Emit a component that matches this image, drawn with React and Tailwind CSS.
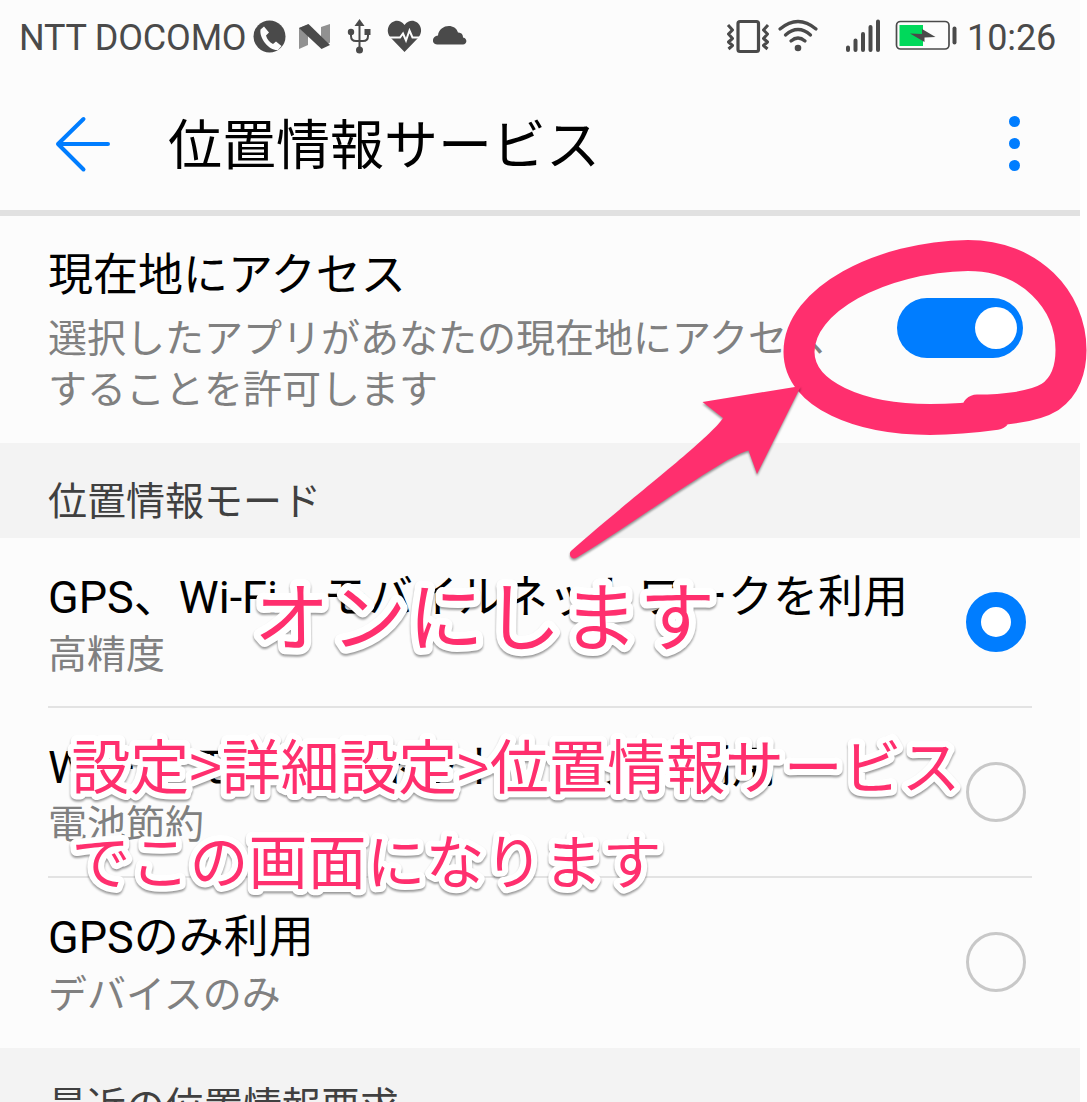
const PINK = '#ff2f6e';

function StatusBar() {
  return (
    <div className="flex h-[76px] items-center justify-between pl-[19px] pr-[25px] text-[#4a4a4a]">
      <div className="flex items-center">
        <span className="w-[231px] whitespace-nowrap text-[36px] leading-[76px] tracking-[-0.2px]">NTT DOCOMO</span>
        <svg className="h-[76px] w-[220px]" viewBox="250 0 220 76" fill="currentColor">
          <circle cx="269.500" cy="36.500" r="16" />
          <path d="M260.500 29.500l3.500-3 5 6-3 3c1 4 3.500 6.500 7 8.500l3-2.500 5.500 4.500-3.500 4c-8 1-19-11-17.500-20.500z" fill="#fcfcfc" />
          <path d="M299 28l9-3.500V45l-9 4zM321 27l9-3v18.500L321 48z" opacity=".6" />
          <path d="M299 28l9.500-4L330 45l-8.500 4z" />
          <path d="M359.500 19l5 7h-10z" />
          <path d="M359.500 24v26M351 33v3q0 5 5 5h7q5 0 5-5v-3" fill="none" stroke="currentColor" strokeWidth="2" />
          <circle cx="351" cy="32" r="3.200" />
          <rect x="364.500" y="29" width="6" height="6" />
          <circle cx="359.500" cy="50" r="3.500" />
          <path d="M404.500 52l-14-14.500C382 27 396 14 404.500 25c8.500-11 22.500 2 14 12.500z" />
          <path d="M387 37.500h13l3-4 3 7 3.500-10 3 7H423" fill="none" stroke="#fcfcfc" strokeWidth="2" />
          <path d="M437 44.500c-6 0-5-9 1-9 1-11 17-13 20-3 5 0 5 4 5 5 5 1 4 7 0 7z" />
        </svg>
      </div>
      <div className="flex items-center">
        <svg className="h-[76px] w-[240px]" viewBox="724 0 240 76" fill="none" stroke="currentColor">
          <rect x="738" y="21.500" width="20.500" height="30" rx="2" strokeWidth="3.200" />
          <path d="M728 25l4.500 5-4 4 4 4.500-4 3.500 4 3.500-4 3.500M768 25l-4.500 5 4 4-4 4.500 4 3.500-4 3.500 4 3.500" strokeWidth="3" strokeLinejoin="round" />
          <path d="M780 29q18-15 36 0M785.500 35q12.500-11 25 0M791 41q7-6 14 0" strokeWidth="3.300" strokeLinecap="round" />
          <circle cx="798" cy="48" r="3.300" fill="currentColor" stroke="none" />
          <path d="M848 47.500v2.500M855.500 40.500V50M863 34v16M870.500 27v23M878 21.500V50" strokeWidth="4" strokeLinecap="round" />
          <rect x="896.500" y="21.500" width="52.500" height="27.500" rx="4" strokeWidth="1.700" />
          <rect x="899.500" y="25" width="23.500" height="21" fill="#00d95b" stroke="none" />
          <path d="M910 33.500l12 .500v-5l13.500 8-11 .5v4.500z" fill="currentColor" stroke="none" />
          <path d="M954.500 28.500v14" strokeWidth="4" strokeLinecap="round" />
        </svg>
        <span className="ml-[3px] w-[88px] whitespace-nowrap text-[36px] leading-[76px] tracking-[-0.1px]">10:26</span>
      </div>
    </div>
  );
}

function Header() {
  return (
    <header className="flex h-[140px] items-center border-b-[6px] border-[#e1e1e1] pl-[54px] pr-[57px] pt-px">
      <svg className="h-[60px] w-[58px]" viewBox="54 114 58 60" fill="none" stroke="#007dff" strokeWidth="4" strokeLinecap="round" strokeLinejoin="round">
        <path d="M83.500 119L58 144 83.500 169.500M58 144h50" />
      </svg>
      <h1 className="ml-14 flex-1 pt-[7px] text-[54px] leading-[80px]">位置情報サービス</h1>
      <div className="flex w-[18px] flex-col items-center gap-[11px]">
        <i className="size-[11px] rounded-full bg-[#007dff]" />
        <i className="size-[11px] rounded-full bg-[#007dff]" />
        <i className="size-[11px] rounded-full bg-[#007dff]" />
      </div>
    </header>
  );
}

function SectionTitle({ children }) {
  return <h2 className="h-[95px] bg-[#f3f3f3] pl-12 pt-[31px] text-[39px] leading-[56px] text-[#404040]">{children}</h2>;
}

function ModeRow({ title, detail, selected, last }) {
  return (
    <div className="flex h-[170px] items-stretch pl-12 pr-12">
      <div className={`flex flex-1 items-start justify-between pr-1.5 ${last ? '' : 'border-b-2 border-[#e3e3e3]'}`}>
        <div className="pt-[27px]">
          <div className="whitespace-nowrap text-[45px] leading-[66px]">{title}</div>
          <div className="text-[39px] leading-[48px] text-[#808080]">{detail}</div>
        </div>
        <span
          className={`mt-[54px] size-[60px] shrink-0 rounded-full ${
            selected ? 'border-[15px] border-[#007dff] bg-white' : 'border-[3px] border-[#c8c8c8]'
          }`}
        />
      </div>
    </div>
  );
}

/* Hand-drawn marks and captions lying over the settings screen */
function Annotations() {
  return (
    <svg className="pointer-events-none absolute inset-0 h-[1102px] w-[1087px]" viewBox="0 0 1087 1102">
      <path
        d="M977 410C1003 410 1034 407 1050 397C1065 387 1071 369 1071 350C1071 300 1030 255.500 968 255.500C880 257 799 300 799 352C799 395 860 419.500 930 419.500C955 419.500 978 417 996 414.500"
        fill="none"
        stroke={PINK}
        strokeWidth="31"
        strokeLinecap="round"
      />
      <g style={{ filter: 'drop-shadow(0 2px 1px rgba(0,0,0,.4))' }}>
        <path d="M571 551C620 507 711 438 723 418L702.500 402 801 386 757 474 748.500 450.500C725 456 640 519 577 557.500Q573 560 570.500 556.500 569 553 571 551z" fill={PINK} />
      </g>
      <g
        fill={PINK}
        stroke="#fff"
        strokeLinejoin="round"
        paintOrder="stroke"
        fontFamily='"Noto Sans CJK JP", sans-serif'
        style={{ filter: 'drop-shadow(0 2px 1px rgba(0,0,0,.4))' }}
      >
        <text x="254" y="645" fontSize="75.500" strokeWidth="14" textLength="461">オンにします</text>
        <text x="71.500" y="789" fontSize="59" strokeWidth="12" textLength="889">設定&gt;詳細設定&gt;位置情報サービス</text>
        <text x="71.500" y="883.500" fontSize="59" strokeWidth="12">でこの画面になります</text>
      </g>
    </svg>
  );
}

export default function App() {
  return (
    <div className="relative h-[1102px] w-[1087px] overflow-hidden bg-white font-['Roboto','Noto_Sans_CJK_JP',sans-serif] text-black">
      <div className="w-[1080px] bg-[#fcfcfc]">
        <StatusBar />
        <Header />
        <section className="flex h-[227px] items-start justify-between pl-12 pr-[57px] pt-[27px]">
          <div>
            <div className="text-[45px] leading-[66px]">現在地にアクセス</div>
            <p className="w-[785px] pt-[5px] text-[39px] leading-[51px] text-[#808080]">
              選択したアプリがあなたの現在地にアクセスすることを許可します
            </p>
          </div>
          <div className="mt-[55px] flex h-[60px] w-[126px] shrink-0 items-center justify-end rounded-full bg-[#007dff] pr-1.5">
            <span className="size-[42px] rounded-full bg-white" />
          </div>
        </section>
        <SectionTitle>位置情報モード</SectionTitle>
        <ModeRow title="GPS、Wi-Fi、モバイルネットワークを利用" detail="高精度" selected />
        <ModeRow title="Wi-Fi、モバイルネットワークを利用" detail="電池節約" />
        <ModeRow title="GPSのみ利用" detail="デバイスのみ" last />
        <SectionTitle>最近の位置情報要求</SectionTitle>
      </div>
      <Annotations />
    </div>
  );
}
